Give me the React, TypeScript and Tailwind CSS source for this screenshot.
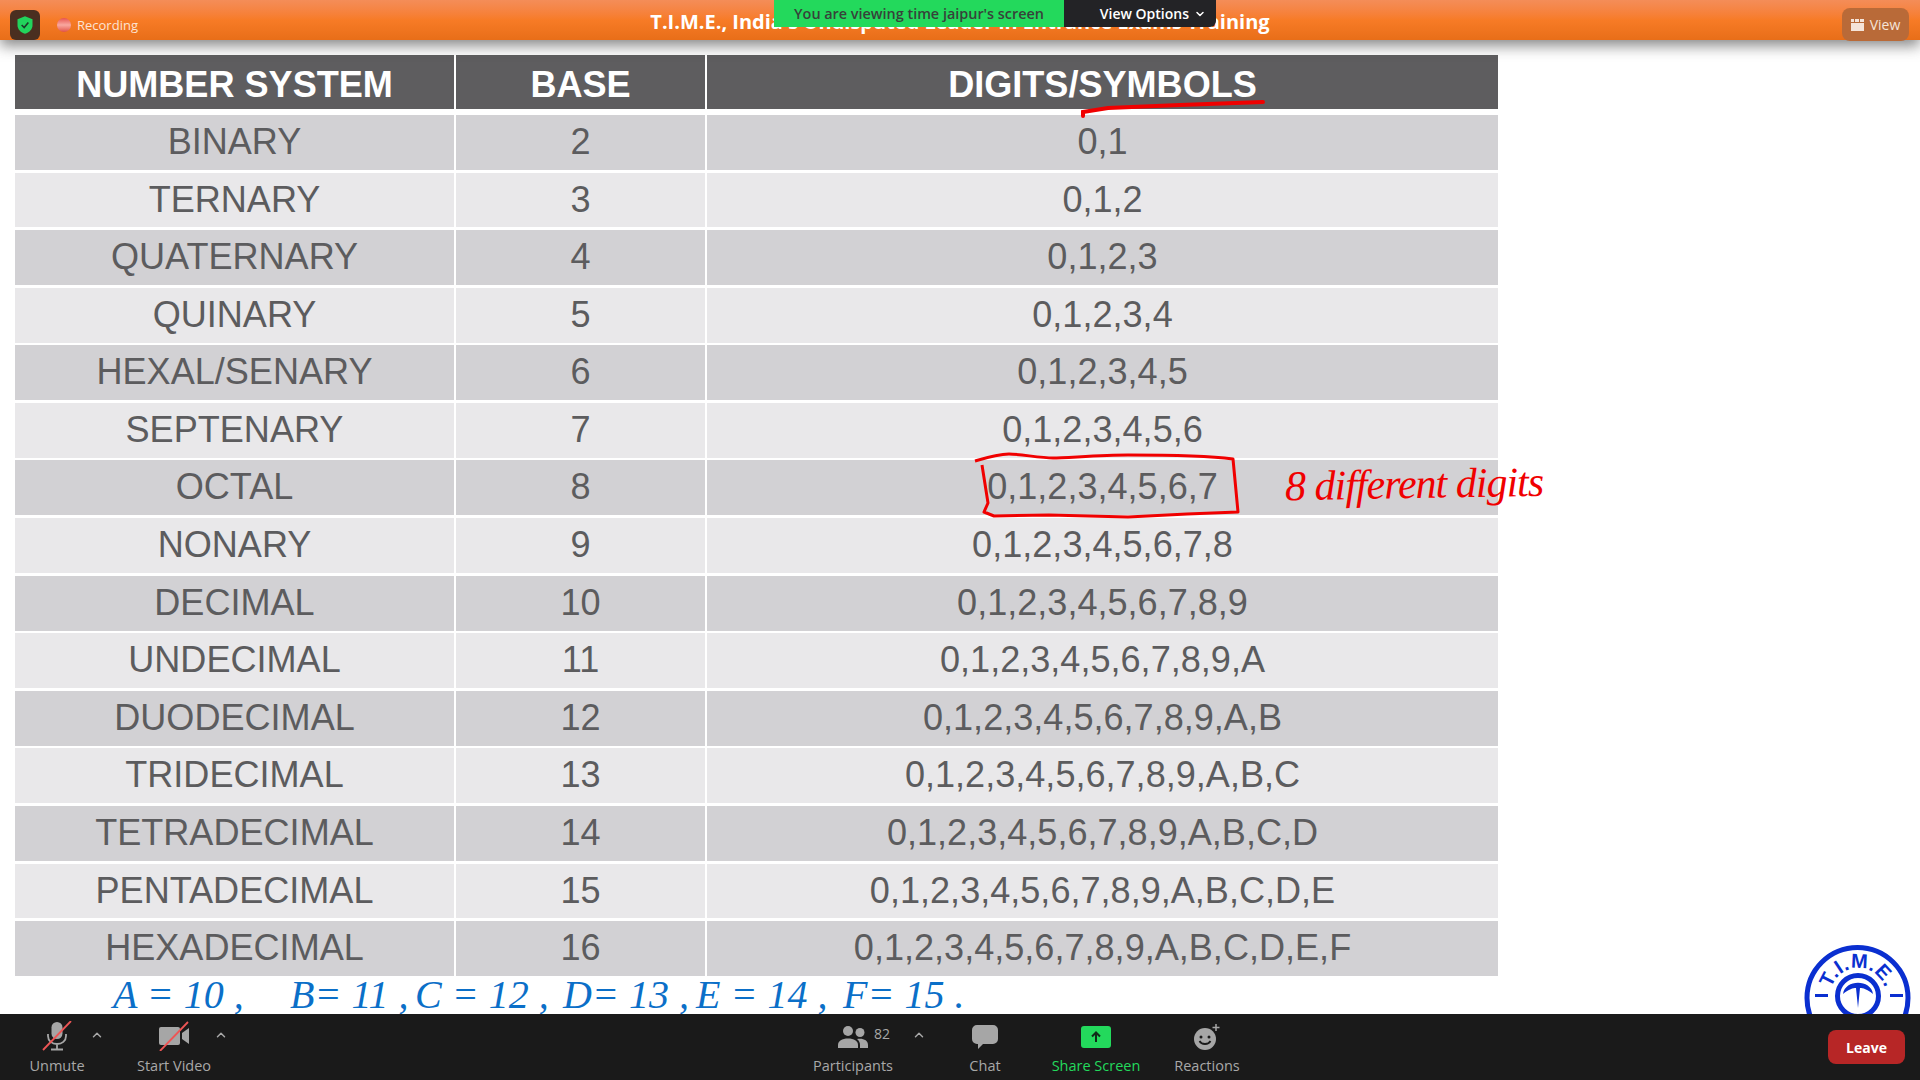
import { ChevronUp, ChevronDown } from "lucide-react"

const rows = [
  ["BINARY", "2", "0,1"],
  ["TERNARY", "3", "0,1,2"],
  ["QUATERNARY", "4", "0,1,2,3"],
  ["QUINARY", "5", "0,1,2,3,4"],
  ["HEXAL/SENARY", "6", "0,1,2,3,4,5"],
  ["SEPTENARY", "7", "0,1,2,3,4,5,6"],
  ["OCTAL", "8", "0,1,2,3,4,5,6,7"],
  ["NONARY", "9", "0,1,2,3,4,5,6,7,8"],
  ["DECIMAL", "10", "0,1,2,3,4,5,6,7,8,9"],
  ["UNDECIMAL", "11", "0,1,2,3,4,5,6,7,8,9,A"],
  ["DUODECIMAL", "12", "0,1,2,3,4,5,6,7,8,9,A,B"],
  ["TRIDECIMAL", "13", "0,1,2,3,4,5,6,7,8,9,A,B,C"],
  ["TETRADECIMAL", "14", "0,1,2,3,4,5,6,7,8,9,A,B,C,D"],
  ["PENTADECIMAL", "15", "0,1,2,3,4,5,6,7,8,9,A,B,C,D,E"],
  ["HEXADECIMAL", "16", "0,1,2,3,4,5,6,7,8,9,A,B,C,D,E,F"],
]

const blueNotes = [
  ["A = 10 ,", "left-[113px]"],
  ["B= 11 ,", "left-[290px]"],
  ["C = 12 ,", "left-[415px]"],
  ["D= 13 ,", "left-[563px]"],
  ["E = 14 ,", "left-[696px]"],
  ["F= 15 .", "left-[843px]"],
]

const TopBar = () => (
  <div className="relative z-10 flex h-[40px] shrink-0 items-start bg-gradient-to-b from-[#f48d58] via-[#f77b26] to-[#e86e18] shadow-[0_6px_14px_rgba(60,60,60,0.6)]">
    <div className="ml-[10px] mt-[10px] flex h-[30px] w-[30px] items-center justify-center rounded-md bg-[#4a2f20]">
      <svg viewBox="0 0 24 24" className="h-[20px] w-[20px]">
        <path d="M12 1.5 21 5v7c0 5.5-4 9-9 10.5C7 21 3 17.500 3 12V5z" fill="#22d45c" />
        <path d="m8 12 3 3 5-6" fill="none" stroke="#1d3a28" strokeWidth="2" />
      </svg>
    </div>
    <span className="ml-[17px] mt-[18px] h-[14px] w-[14px] shrink-0 rounded-full bg-gradient-to-b from-[#e65050] via-[#f8a8a0] to-[#e05048]" />
    <span className="ml-[6px] mt-[15px] text-[13px] leading-[20px] text-[#fde3d2]">Recording</span>
    <div className="absolute left-0 right-0 top-[7px] text-center text-[20px] font-bold leading-[30px] text-white">
      T.I.M.E., India's Undisputed Leader in Entrance Exams Training
    </div>
    <div className="absolute left-[774px] top-0 flex h-[27px]">
      <div className="flex w-[290px] items-center justify-center bg-[#23d95c] text-[14.400px] font-semibold text-[#37423a]">
        You are viewing time jaipur's screen
      </div>
      <div className="flex w-[152px] items-center justify-end gap-[5px] rounded-br-md bg-[#232326] pr-[10px] text-[14px] font-semibold text-white">
        View Options <ChevronDown size={12} strokeWidth={3} />
      </div>
    </div>
    <div className="absolute left-[1842px] top-[8px] flex h-[33px] w-[67px] items-center justify-center gap-[6px] rounded-lg bg-[#b96a38] text-[14px] text-[#f5e4d8]">
      <div className="flex w-[13px] flex-col gap-[1px]">
        <div className="grid grid-cols-3 gap-[1px]">
          <div className="h-[3px] bg-[#f5e4d8]" />
          <div className="h-[3px] bg-[#f5e4d8]" />
          <div className="h-[3px] bg-[#f5e4d8]" />
        </div>
        <div className="h-[8px] bg-[#f5e4d8]" />
      </div>
      View
    </div>
  </div>
)

const Table = () => (
  <div className="flex w-[1483px] flex-col font-['Liberation_Sans',Arial,sans-serif] text-[36.100px]">
    <div className="mb-[6px] grid h-[54px] grid-cols-[439px_249px_1fr] gap-x-[2px] font-bold leading-[49px] text-white">
      <div className="bg-[#5e5d5f] pt-[5px] text-center">NUMBER SYSTEM</div>
      <div className="bg-[#5e5d5f] pt-[5px] text-center">BASE</div>
      <div className="bg-[#5e5d5f] pt-[5px] text-center">DIGITS/SYMBOLS</div>
    </div>
    {rows.map((row, i) => (
      <div
        key={row[0]}
        className="mb-[2.700px] grid h-[54.900px] grid-cols-[439px_249px_1fr] gap-x-[2px] leading-[54.900px] text-[#5c5c5e]">
        {row.map(cell => (
          <div key={cell} className={`text-center ${i % 2 === 0 ? "bg-[#d2d1d4]" : "bg-[#e9e8ea]"}`}>
            {cell}
          </div>
        ))}
      </div>
    ))}
  </div>
)

const Ink = () => (
  <>
    <svg className="absolute left-0 top-0 z-20 h-[1014px] w-[1920px]" viewBox="0 0 1920 1014" fill="none">
      <path d="M1083 116 1083 112 1108 108 1180 105 1263 102" stroke="#f00000" strokeWidth="4" strokeLinecap="round" />
      <path
        d="M975 461C985 458 998 454 1009 454S1040 458 1053 458 1100 455 1128 455 1210 456 1233 459L1238 512 1187 514 1128 517 1049 515 994 516 984 512 988 503 982 465"
        stroke="#f00000"
        strokeWidth="3"
        strokeLinejoin="round"
      />
    </svg>
    <span className="absolute left-[1285px] top-[461px] z-20 -rotate-1 font-['Liberation_Serif',serif] text-[42px] italic leading-[46px] tracking-[-1px] text-[#f00000]">
      8 different digits
    </span>
    <div className="absolute left-0 top-[976px] z-20 h-[38px] w-[1000px] font-['Liberation_Serif',serif] text-[40px] italic leading-[38px] text-[#0b6fc8]">
      {blueNotes.map(([text, left]) => (
        <span key={text} className={`absolute top-0 whitespace-nowrap ${left}`}>
          {text}
        </span>
      ))}
    </div>
  </>
)

const Logo = () => (
  <div className="absolute left-[1804px] top-[945px] z-20 h-[69px] w-[109px] overflow-hidden bg-white">
    <svg viewBox="0 0 109 109" className="h-[109px] w-[109px]">
      <circle cx="53.500" cy="53" r="50.500" fill="none" stroke="#0a2fd0" strokeWidth="5" />
      <circle cx="54" cy="51" r="20.500" fill="none" stroke="#0a2fd0" strokeWidth="5" />
      <path d="M39 49C41 34 67 34 69 49 63 44 59 43 56 43L54 63 52 43C49 43 45 44 39 49Z" fill="#0a2fd0" />
      <rect x="11" y="49" width="13" height="3" fill="#0a2fd0" />
      <rect x="86" y="49" width="13" height="3" fill="#0a2fd0" />
      <defs>
        <path id="logoArc" d="M26 51A28 28 0 0 1 82 51" />
      </defs>
      <text fill="#0a2fd0" fontSize="20" fontWeight="700" letterSpacing="0.500" fontFamily="Liberation Sans, sans-serif">
        <textPath href="#logoArc" startOffset="50%" textAnchor="middle">
          T.I.M.E.
        </textPath>
      </text>
    </svg>
  </div>
)

const ToolItem = ({ label, width, color = "text-[#a8a8a8]", children }: { label: string; width: string; color?: string; children: React.ReactNode }) => (
  <div className={`flex flex-col items-center ${width}`}>
    <div className="relative flex h-[34px] w-full items-center justify-center">{children}</div>
    <span className={`mt-[3px] whitespace-nowrap text-[14.500px] leading-[19px] ${color}`}>{label}</span>
  </div>
)

const Caret = () => <ChevronUp size={14} strokeWidth={2.500} className="text-[#a8a8a8]" />

const Toolbar = () => (
  <div className="relative z-30 flex h-[66px] shrink-0 items-start bg-[#1a1a1a] pt-[5px]">
    <ToolItem label="Unmute" width="w-[114px]">
      <svg viewBox="0 0 30 30" className="h-[30px] w-[30px]">
        <rect x="9.500" y="1" width="11" height="17" rx="5.500" fill="#a6a6a6" />
        <path d="M6 13v2c0 5 4 8 9 8s9-3 9-8v-2M15 23v5M9 28.500h12" fill="none" stroke="#a6a6a6" strokeWidth="1.800" />
        <path d="M1 29 29 0" stroke="#ee5555" strokeWidth="1.800" />
      </svg>
      <span className="absolute left-[90px] top-[9px]">
        <Caret />
      </span>
    </ToolItem>
    <ToolItem label="Start Video" width="w-[120px]">
      <svg viewBox="0 0 32 30" className="h-[30px] w-[32px]">
        <path d="M1 8a2 2 0 0 1 2-2h17a2 2 0 0 1 2 2v14a2 2 0 0 1-2 2H3a2 2 0 0 1-2-2z" fill="#a6a6a6" />
        <path d="m24 12 7-5v16l-7-5z" fill="#a6a6a6" />
        <path d="M2 30 30 1" stroke="#ee5555" strokeWidth="1.800" />
      </svg>
      <span className="absolute left-[100px] top-[9px]">
        <Caret />
      </span>
    </ToolItem>
    <div className="ml-[553px] flex">
      <ToolItem label="Participants" width="w-[132px]">
        <svg viewBox="0 0 30 22" className="mt-[2px] h-[22px] w-[30px]">
          <circle cx="10" cy="5" r="5" fill="#a6a6a6" />
          <circle cx="22" cy="6.500" r="4.500" fill="#a6a6a6" />
          <path d="M0 22v-3c0-4 4-6.500 10-6.500S20 15 20 19v3z" fill="#a6a6a6" />
          <path d="M22 22v-3c0-2.500-1-4.500-3-6 6-1 11 1 11 6v3z" fill="#a6a6a6" />
        </svg>
        <span className="absolute left-[87px] top-[4px] text-[14px] text-[#a8a8a8]">82</span>
        <span className="absolute left-[125px] top-[9px]">
          <Caret />
        </span>
      </ToolItem>
      <div className="ml-[10.500px]">
        <ToolItem label="Chat" width="w-[111px]">
          <svg viewBox="0 0 26 24" className="mt-[2px] h-[24px] w-[26px]">
            <path d="M5 0h16a5 5 0 0 1 5 5v9a5 5 0 0 1-5 5H11l-5 5v-5H5a5 5 0 0 1-5-5V5a5 5 0 0 1 5-5z" fill="#a6a6a6" />
          </svg>
        </ToolItem>
      </div>
      <ToolItem label="Share Screen" width="w-[111px]" color="text-[#23d95c]">
        <div className="mt-[2px] flex h-[22px] w-[30px] items-center justify-center rounded-[3px] bg-[#23d95c]">
          <svg viewBox="0 0 12 12" className="h-[12px] w-[12px]">
            <path d="M6 11V2M2 5.500 6 1.500l4 4" fill="none" stroke="#102a18" strokeWidth="2" />
          </svg>
        </div>
      </ToolItem>
      <ToolItem label="Reactions" width="w-[111px]">
        <svg viewBox="0 0 28 26" className="mt-[1px] h-[26px] w-[28px]">
          <circle cx="12" cy="15" r="11" fill="#a6a6a6" />
          <circle cx="8" cy="13" r="1.500" fill="#1a1a1a" />
          <circle cx="16" cy="13" r="1.500" fill="#1a1a1a" />
          <path d="M6.500 17c2 4 9 4 11 0" fill="none" stroke="#1a1a1a" strokeWidth="1.800" />
          <path d="M23 0v7M19.500 3.500h7" stroke="#a6a6a6" strokeWidth="1.500" />
        </svg>
      </ToolItem>
    </div>
    <div className="absolute left-[1828px] top-[16px] flex h-[34px] w-[77px] items-center justify-center rounded-lg bg-[#b72626] text-[14px] font-bold text-white">
      Leave
    </div>
  </div>
)

export default function App() {
  return (
    <div className="relative flex h-[1080px] w-[1920px] flex-col overflow-hidden bg-white font-['Open_Sans',sans-serif]">
      <TopBar />
      <div className="flex-1 pl-[15px] pt-[15px]">
        <Table />
      </div>
      <Ink />
      <Logo />
      <Toolbar />
    </div>
  )
}
